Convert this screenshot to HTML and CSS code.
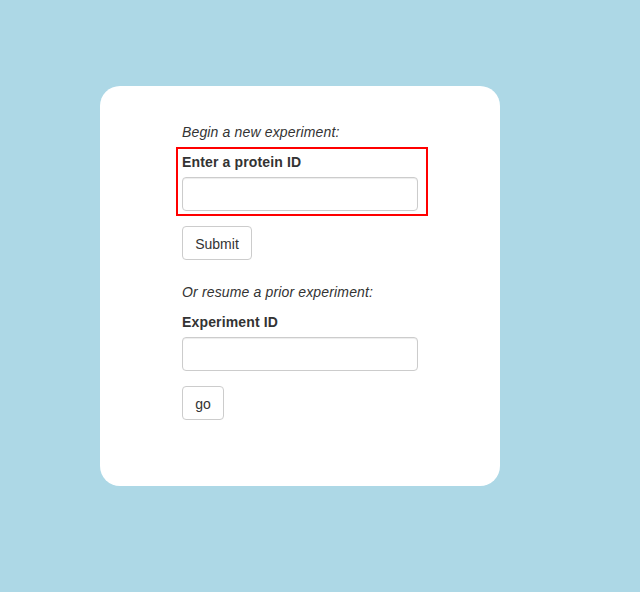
FILE: index.html
```html
<!DOCTYPE html>
<html>
<head>
<meta charset="utf-8">
<link rel="stylesheet" href="styles.css">
</head>
<body>
<div class="page">
  <div class="card">
    <p class="note first">Begin a new experiment:</p>
    <div class="group highlighted">
      <label class="label">Enter a protein ID</label>
      <input class="field" type="text">
    </div>
    <button class="btn btn-submit">Submit</button>
    <p class="note second">Or resume a prior experiment:</p>
    <div class="group">
      <label class="label">Experiment ID</label>
      <input class="field" type="text">
    </div>
    <button class="btn btn-go">go</button>
  </div>
</div>
</body>
</html>
```
FILE: styles.css
```css
html, body {
  margin: 0;
  padding: 0;
}
body {
  background: #add8e6;
  font-family: "Liberation Sans", Arial, sans-serif;
  font-size: 14px;
  line-height: 20px;
  color: #333;
  letter-spacing: 0.15px;
}
.page {
  padding: 86px 0 0 100px;
}
.card {
  box-sizing: border-box;
  width: 400px;
  height: 400px;
  background: #fff;
  border-radius: 20px;
  padding: 36px 0 0 82px;
  display: flex;
  flex-direction: column;
  align-items: flex-start;
}
.note {
  font-style: italic;
  margin: 0;
  height: 20px;
}
.note.first {
  margin-bottom: 5px;
}
.note.second {
  margin-top: 22px;
  margin-bottom: 10px;
}
.group {
  display: flex;
  flex-direction: column;
  align-items: flex-start;
}
.group.highlighted {
  border: 2px solid #f00;
  padding: 3px 8px 3px 4px;
  margin-left: -6px;
  margin-bottom: 10px;
}
.group + .btn-go {
  margin-top: 15px;
}
.label {
  font-weight: bold;
  line-height: 20px;
  margin-bottom: 5px;
}
.field {
  box-sizing: border-box;
  width: 236px;
  height: 34px;
  border: 1px solid #ccc;
  border-radius: 4px;
  box-shadow: inset 0 1px 1px rgba(0,0,0,0.075);
  padding: 6px 12px;
  font: inherit;
  background: #fff;
  margin: 0;
}
.btn {
  box-sizing: border-box;
  height: 34px;
  padding: 7px 12px 5px;
  border: 1px solid #ccc;
  border-radius: 4px;
  background: #fff;
  color: #333;
  font-family: inherit;
  font-size: 14px;
  line-height: 20px;
  letter-spacing: 0;
  margin: 0;
}
.btn-submit {
  width: 70px;
}
.btn-go {
  width: 42px;
}
```
